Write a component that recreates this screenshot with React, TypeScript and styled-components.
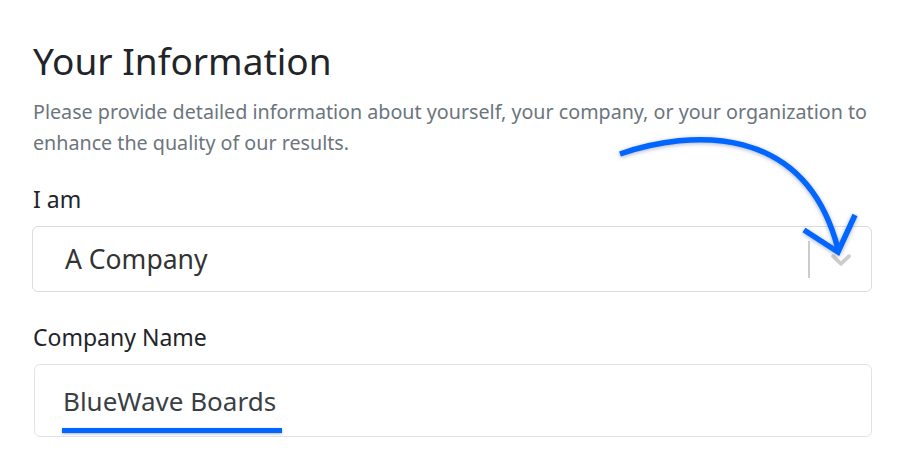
import React from 'react';
import styled, { createGlobalStyle } from 'styled-components';

const GlobalStyle = createGlobalStyle`
  body {
    margin: 0;
    background: #ffffff;
    font-family: "Noto Sans", "Open Sans", sans-serif;
  }
`;

const Page = styled.div`
  position: relative;
  width: 918px;
  height: 465px;
  overflow: hidden;
  padding: 36px 46px 0 33px;
  box-sizing: border-box;
`;

const Title = styled.h2`
  margin: 0;
  font-size: 37px;
  font-weight: 400;
  line-height: 50px;
  color: #212529;
`;

const Lead = styled.p`
  margin: 10px 0 0;
  font-size: 19.7px;
  line-height: 31px;
  color: #6c757d;
  white-space: nowrap;
`;

const Field = styled.div<{ $top: number }>`
  margin-top: ${(p) => p.$top}px;
  display: flex;
  flex-direction: column;
`;

const Label = styled.label`
  font-size: 23px;
  line-height: 30px;
  color: #212529;
  margin-bottom: 12px;
`;

const SelectBox = styled.div`
  display: flex;
  align-items: center;
  height: 66px;
  border: 1px solid #dcdcdc;
  border-radius: 6px;
  box-sizing: border-box;
  margin-left: -1px;
`;

const SelectValue = styled.div`
  flex: 1;
  padding-left: 32px;
  font-size: 26.5px;
  color: #333333;
`;

const Separator = styled.span`
  width: 2px;
  height: 37px;
  background: #cccccc;
`;

const ChevronWrap = styled.div`
  width: 61px;
  display: flex;
  justify-content: center;
  align-items: center;
  color: #cccccc;
`;

const InputBox = styled.div`
  position: relative;
  display: flex;
  align-items: center;
  height: 73px;
  margin-left: 1px;
  border: 1px solid #e3e3e3;
  border-radius: 6px;
  box-sizing: border-box;
  padding-left: 28px;
  font-size: 26px;
  color: #3a3f44;
`;

const Underline = styled.span`
  position: absolute;
  left: 27px;
  top: 63px;
  width: 220px;
  height: 5px;
  background: #0066ff;
  box-shadow: 0 1px 3px rgba(0, 40, 120, 0.35);
`;

const ArrowLayer = styled.svg`
  position: absolute;
  left: 0;
  top: 0;
  pointer-events: none;
  filter: drop-shadow(0 1px 2px rgba(0, 30, 90, 0.35));
`;

const Chevron = () => (
  <svg width="34" height="34" viewBox="0 0 20 20" fill="currentColor">
    <path d="M4.516 7.548c0.436-0.446 1.043-0.481 1.576 0l3.908 3.747 3.908-3.747c0.533-0.481 1.141-0.446 1.574 0 0.436 0.445 0.408 1.197 0 1.615-0.406 0.418-4.695 4.502-4.695 4.502-0.217 0.223-0.502 0.335-0.787 0.335s-0.57-0.112-0.789-0.335c0 0-4.287-4.084-4.695-4.502s-0.436-1.17 0-1.615z" />
  </svg>
);

const App: React.FC = () => {
  return (
    <>
      <GlobalStyle />
      <Page>
        <Title>Your Information</Title>
        <Lead>
          Please provide detailed information about yourself, your company, or your organization to
          <br />
          enhance the quality of our results.
        </Lead>

        <Field $top={26}>
          <Label>I am</Label>
          <SelectBox>
            <SelectValue>A Company</SelectValue>
            <Separator />
            <ChevronWrap>
              <Chevron />
            </ChevronWrap>
          </SelectBox>
        </Field>

        <Field $top={30}>
          <Label>Company Name</Label>
          <InputBox>
            BlueWave Boards
            <Underline />
          </InputBox>
        </Field>

        <ArrowLayer width="918" height="465" viewBox="0 0 918 465">
          <g fill="none" stroke="#0066ff" strokeWidth="5.5" strokeLinecap="butt" strokeLinejoin="miter">
            <path d="M620 154 C 690 130, 805 122, 838 249" />
            <path d="M804 230 L838 252 L855 215" />
          </g>
        </ArrowLayer>
      </Page>
    </>
  );
};

export default App;
